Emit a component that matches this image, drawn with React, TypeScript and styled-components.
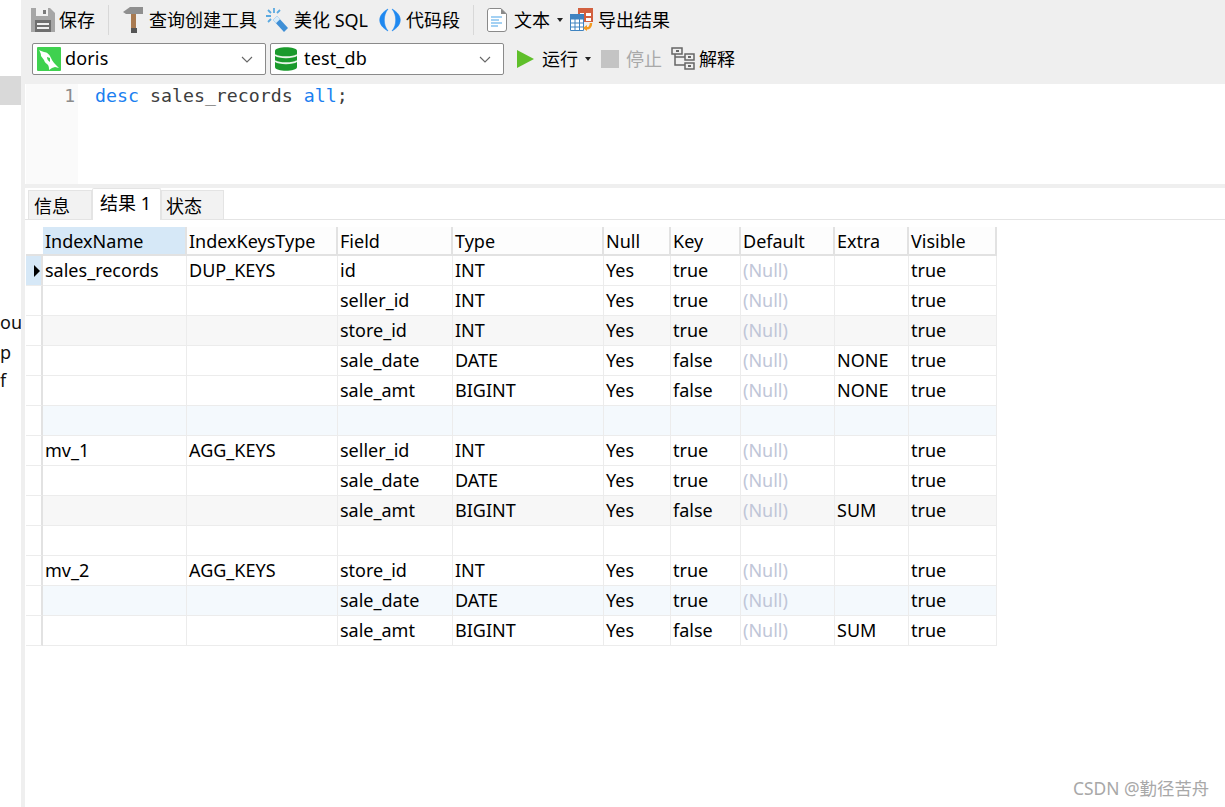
import React from "react";
import styled, { createGlobalStyle } from "styled-components";

const UI = `"Noto Sans", "Noto Sans CJK SC", sans-serif`;

const Global = createGlobalStyle`
  html, body { margin: 0; padding: 0; background: #fff; }
  #root { width: 1225px; height: 807px; }
`;
const Page = styled.div`
  position: relative; display: flex; width: 1225px; height: 807px; overflow: hidden;
  font-family: ${UI}; font-size: 18px; color: #000; background: #fff;
`;
const Side = styled.aside`
  width: 21px; flex: none; padding-top: 76px; box-sizing: border-box; overflow: hidden; background: #fff;
`;
const SideMark = styled.div`height: 29px; background: #d9d9d9;`;
const SideText = styled.div<{ $top: number }>`
  margin-top: ${(p) => p.$top}px; height: 20px; line-height: 20px; font-size: 18px; white-space: nowrap; color: #111;
`;
const Splitter = styled.div`width: 4px; flex: none; background: #efefef;`;
const Main = styled.main`flex: 1; min-width: 0; display: flex; flex-direction: column;`;
const Toolbar = styled.div`height: 84px; background: #efefef; margin-left: -3px; padding-left: 3px; box-sizing: border-box;`;
const Row = styled.div<{ $h: number; $pad: number }>`display: flex; align-items: center; height: ${(p) => p.$h}px; padding-left: ${(p) => p.$pad}px;`;
const Tool = styled.div<{ $ml?: number; $gap?: number; $off?: boolean }>`
  display: flex; align-items: center; flex: none; margin-left: ${(p) => p.$ml ?? 0}px; gap: ${(p) => p.$gap ?? 4}px;
  white-space: nowrap; line-height: 24px; color: ${(p) => (p.$off ? "#a9a9a9" : "#000")};
`;
const Sep = styled.div<{ $ml: number }>`width: 1px; height: 30px; flex: none; background: #d8d8d8; margin-left: ${(p) => p.$ml}px;`;
const Caret = styled.span<{ $ml: number }>`
  width: 0; height: 0; flex: none; border: 3px solid transparent; border-top: 4px solid #222; border-bottom: 0;
  margin-left: ${(p) => p.$ml}px;
`;
const Select = styled.div<{ $ml?: number; $gap: number }>`
  width: 234px; height: 32px; flex: none; box-sizing: border-box; display: flex; align-items: center; margin-left: ${(p) => p.$ml ?? 0}px;
  background: #fff; border: 1px solid #8a8a8a; border-radius: 2px; padding: 0 12px 0 4px; gap: ${(p) => p.$gap}px; font-size: 18px;
`;
const SelectText = styled.span`flex: 1; line-height: 24px; padding-bottom: 2px; letter-spacing: 0.15px;`;

const Editor = styled.div`height: 100px; display: flex; background: #fff;`;
const Gutter = styled.div`
  width: 52px; margin-left: 1px; flex: none; box-sizing: border-box; padding: 0 3px 0 0; text-align: right; background: #fafafa;
  font-family: "DejaVu Sans Mono", monospace; font-size: 18px; line-height: 24px; color: #8c8c8c;
`;
const Code = styled.div`
  padding-left: 17px; font-family: "DejaVu Sans Mono", monospace; font-size: 18.25px; line-height: 24px; color: #3d3d3d; white-space: pre;
`;
const Kw = styled.span`color: #1a80f0;`;
const HSplit = styled.div`height: 4px; background: #efefef;`;
const Tabs = styled.div`height: 32px; box-sizing: border-box; display: flex; align-items: flex-end; padding-left: 3px; border-bottom: 1px solid #e4e4e4; background: #fff;`;
const Tab = styled.div<{ $active?: boolean; $w: number; $pad: number }>`
  width: ${(p) => p.$w}px; height: ${(p) => (p.$active ? 32 : 29)}px; box-sizing: border-box; flex: none; padding-left: ${(p) => p.$pad}px;
  line-height: ${(p) => (p.$active ? 29 : 30)}px; white-space: nowrap;
  background: ${(p) => (p.$active ? "#fff" : "#f2f2f2")};
  border: 1px solid #e4e4e4; border-bottom: 0; border-radius: ${(p) => (p.$active ? "2px 2px 0 0" : "0")};
  margin-bottom: ${(p) => (p.$active ? -1 : 0)}px; position: relative;
`;
const TableWrap = styled.div`padding: 7px 0 0 1px;`;
const Table = styled.table`border-collapse: separate; border-spacing: 0; table-layout: fixed; width: 971px; font-size: 18px;`;
const Th = styled.th<{ $sel?: boolean }>`
  height: 29px; box-sizing: border-box; padding: 1px 0 0 2px; text-align: left; font-weight: 400; line-height: 26px; overflow: hidden; white-space: nowrap;
  background: ${(p) => (p.$sel ? "#d6e8f7" : "#fdfdfd")};
  border-right: 2px solid #e2e2e2; border-bottom: 2px solid #e2e2e2;
`;
const Corner = styled.th`background: #fff; padding: 0; border-bottom: 2px solid #e2e2e2;`;
const Td = styled.td<{ $null?: boolean; $tone: string }>`
  height: 30px; box-sizing: border-box; padding: 0 0 0 2px; line-height: 29px; white-space: nowrap; overflow: hidden;
  color: ${(p) => (p.$null ? "#c0c6d8" : "#000")}; background: ${(p) => p.$tone};
  border-right: 1px solid #ececec; border-bottom: 1px solid #ececec;
`;
const RowHead = styled.td<{ $sel?: boolean }>`
  height: 30px; box-sizing: border-box; padding: 0; text-align: left; background: ${(p) => (p.$sel ? "#d6e8f7" : "#fff")};
  border-right: 2px solid #e2e2e2; border-bottom: 1px solid #ececec;
`;
const Pointer = styled.span`
  display: block; width: 0; height: 0; margin-left: 8px; border-left: 6px solid #000; border-top: 6px solid transparent; border-bottom: 6px solid transparent;
`;
const Watermark = styled.div`
  position: absolute; left: 1073px; top: 776px; font-size: 17.4px; line-height: 24px; color: #a8a8a8; white-space: nowrap;
`;

const SaveIcon = () => (
  <svg width="24" height="24" viewBox="0 0 24 24"><path d="M0 0h19l5 5v19H0z" fill="#a6a6a6" /><path d="M5 0h12v8H5z" fill="#f0f0f0" /><path d="M12 2h3v4h-3z" fill="#7a7a7a" /><path d="M4 12h16v12H4z" fill="#6e6e6e" /><path d="M6 15h12v2H6zM6 19h12v2H6z" fill="#efefef" /></svg>
);
const HammerIcon = () => (
  <svg width="20" height="26" viewBox="0 0 20 26"><path d="M0 5 7 0h13v7H3z" fill="#8f8f8f" /><path d="M8 7h5v14H8z" fill="#a97a50" /><path d="M8 21h6v5H8z" fill="#555" /></svg>
);
const WandIcon = () => (
  <svg width="22" height="24" viewBox="0 0 22 24"><path d="m7 12 4-4 11 12-4 4z" fill="#3f8fd6" /><path d="m7 12 4-4 3 3.300-4 4z" fill="#d8ecfa" /><path d="M8 0v5M0 8h5M2 2l3 3M14 2l-3 3M2 14l3-3" stroke="#5aa9e0" strokeWidth="1.800" fill="none" /></svg>
);
const ParenIcon = () => (
  <svg width="22" height="24" viewBox="0 0 22 24"><path d="M9 1C-2 7-2 17 9 23 4 17 4 7 9 1zM13 1c11 6 11 16 0 22 5-6 5-16 0-22z" fill="#1e88f0" stroke="#1e88f0" strokeWidth=".6" /></svg>
);
const DocIcon = () => (
  <svg width="20" height="24" viewBox="0 0 20 24"><path d="M2.500.500H14L19.500 6v15a2.500 2.500 0 0 1-2.500 2.500H3A2 2 0 0 1 .500 21V3A2.500 2.500 0 0 1 2.500.500z" fill="#fff" stroke="#8a8a8a" /><path d="M14 .500V6h5.500z" fill="#8a8a8a" /><path d="M4 9h11M4 12h8M4 15h11M4 18h7" stroke="#4aa3e8" strokeWidth="1.200" /></svg>
);
const ExportIcon = () => (
  <svg width="24" height="24" viewBox="0 0 24 24"><path d="M8 0h15v14H8z" fill="#d2603f" /><path d="M10 5h4v3h-4zM16 5h5v3h-5zM16 10h5v3h-5z" fill="#fff" /><path d="M0 6h14v17H0z" fill="#fff" /><path d="M0 6h14v5H0z" fill="#3f83c0" /><path d="M.5 11h13v11.500H.5zM5 11v12M9.500 11v12M0 15h14M0 19h14" stroke="#3f83c0" fill="none" /><path d="M15 20c4 1 6-1 6-5" stroke="#f39a1f" strokeWidth="2.500" fill="none" /><path d="m13 20 4-3v6z" fill="#f39a1f" /></svg>
);
const DolphinIcon = () => (
  <svg width="24" height="24" viewBox="0 0 24 24"><rect width="24" height="24" rx="1" fill="#3fd14f" /><path d="M2 3c1 1 3 1 5 2 3 0 6 3 7 6 1 3 4 6 8 10l-4-1-3 1-3 2c0-2 0-3-1-5-2-2-3-2-4-5L4 9C4 6 3 5 2 3z" fill="#fff" /><path d="M13 15c-2-1-3-3-3-5l3 1z" fill="#3fd14f" /></svg>
);
const DbIcon = () => (
  <svg width="22" height="24" viewBox="0 0 22 24"><path d="M0 4c0-5 22-5 22 0v16c0 5-22 5-22 0z" fill="#1a9a2c" /><path d="M0 8c4 3 18 3 22 0M0 14c4 3 18 3 22 0" stroke="#e8f5e8" strokeWidth="1.800" fill="none" /></svg>
);
const Chevron = () => (
  <svg width="12" height="7" viewBox="0 0 12 7" fill="none" stroke="#666" strokeWidth="1.100"><path d="m1 1 5 5 5-5" /></svg>
);
const PlayIcon = () => (
  <svg width="17" height="18" viewBox="0 0 17 18"><path d="M0 0l17 9-17 9z" fill="#5fbf2a" /></svg>
);
const StopIcon = () => (
  <svg width="18" height="18" viewBox="0 0 18 18"><path d="M0 0h18v18H0z" fill="#c4c4c4" /></svg>
);
const ExplainIcon = () => (
  <svg width="24" height="24" viewBox="0 0 24 24" fill="none" stroke="#666" strokeWidth="1.500"><path d="M1 1h10v6H1zM14 7h9v6h-9zM14 16h9v6h-9zM4 7v11h10M4 10h10" /><path d="M5 3h3v2H5zM17 9h3v2h-3zM17 18h3v2h-3z" fill="#666" stroke="none" /></svg>
);

const columns = ["IndexName", "IndexKeysType", "Field", "Type", "Null", "Key", "Default", "Extra", "Visible"];
const widths = [17, 144, 151, 115, 151, 67, 70, 94, 74, 88];
const W = "#fff", G = "#f7f7f7", B = "#f4f9fd";
const rows: { c: string[]; tone: string }[] = [
  { c: ["sales_records", "DUP_KEYS", "id", "INT", "Yes", "true", "(Null)", "", "true"], tone: W },
  { c: ["", "", "seller_id", "INT", "Yes", "true", "(Null)", "", "true"], tone: W },
  { c: ["", "", "store_id", "INT", "Yes", "true", "(Null)", "", "true"], tone: G },
  { c: ["", "", "sale_date", "DATE", "Yes", "false", "(Null)", "NONE", "true"], tone: W },
  { c: ["", "", "sale_amt", "BIGINT", "Yes", "false", "(Null)", "NONE", "true"], tone: W },
  { c: ["", "", "", "", "", "", "", "", ""], tone: B },
  { c: ["mv_1", "AGG_KEYS", "seller_id", "INT", "Yes", "true", "(Null)", "", "true"], tone: W },
  { c: ["", "", "sale_date", "DATE", "Yes", "true", "(Null)", "", "true"], tone: W },
  { c: ["", "", "sale_amt", "BIGINT", "Yes", "false", "(Null)", "SUM", "true"], tone: G },
  { c: ["", "", "", "", "", "", "", "", ""], tone: W },
  { c: ["mv_2", "AGG_KEYS", "store_id", "INT", "Yes", "true", "(Null)", "", "true"], tone: W },
  { c: ["", "", "sale_date", "DATE", "Yes", "true", "(Null)", "", "true"], tone: B },
  { c: ["", "", "sale_amt", "BIGINT", "Yes", "false", "(Null)", "SUM", "true"], tone: W },
];

export default function App() {
  return (
    <Page>
      <Global />
      <Side>
        <SideMark />
        <SideText $top={207}>ou</SideText>
        <SideText $top={10}>p</SideText>
        <SideText $top={8}>f</SideText>
      </Side>
      <Splitter />
      <Main>
        <Toolbar>
          <Row $h={40} $pad={6}>
            <Tool><SaveIcon />保存</Tool>
            <Sep $ml={13} />
            <Tool $ml={14} $gap={6}><HammerIcon />查询创建工具</Tool>
            <Tool $ml={9} $gap={6}><WandIcon />美化 SQL</Tool>
            <Tool $ml={11} $gap={5}><ParenIcon />代码段</Tool>
            <Sep $ml={13} />
            <Tool $ml={13} $gap={7}><DocIcon />文本</Tool>
            <Caret $ml={7} />
            <Tool $ml={7} $gap={4}><ExportIcon />导出结果</Tool>
          </Row>
          <Row $h={38} $pad={7}>
            <Select $gap={4}><DolphinIcon /><SelectText>doris</SelectText><Chevron /></Select>
            <Select $ml={4} $gap={7}><DbIcon /><SelectText>test_db</SelectText><Chevron /></Select>
            <Tool $ml={13} $gap={8}><PlayIcon />运行</Tool>
            <Caret $ml={7} />
            <Tool $ml={10} $gap={7} $off><StopIcon />停止</Tool>
            <Tool $ml={9} $gap={4}><ExplainIcon />解释</Tool>
          </Row>
        </Toolbar>
        <Editor>
          <Gutter>1</Gutter>
          <Code><Kw>desc</Kw> sales_records <Kw>all</Kw>;</Code>
        </Editor>
        <HSplit />
        <Tabs>
          <Tab $w={64} $pad={5}>信息</Tab>
          <Tab $active $w={69} $pad={7}>结果 1</Tab>
          <Tab $w={63} $pad={4}>状态</Tab>
        </Tabs>
        <TableWrap>
          <Table>
            <colgroup>
              {widths.map((w, i) => <col key={i} width={w} />)}
            </colgroup>
            <thead>
              <tr>
                <Corner />
                {columns.map((c, i) => <Th key={c} $sel={i === 0}>{c}</Th>)}
              </tr>
            </thead>
            <tbody>
              {rows.map((r, i) => (
                <tr key={i}>
                  <RowHead $sel={i === 0}>{i === 0 && <Pointer />}</RowHead>
                  {r.c.map((c, j) => <Td key={j} $tone={r.tone} $null={c === "(Null)"}>{c}</Td>)}
                </tr>
              ))}
            </tbody>
          </Table>
        </TableWrap>
      </Main>
      <Watermark>CSDN @勤径苦舟</Watermark>
    </Page>
  );
}
